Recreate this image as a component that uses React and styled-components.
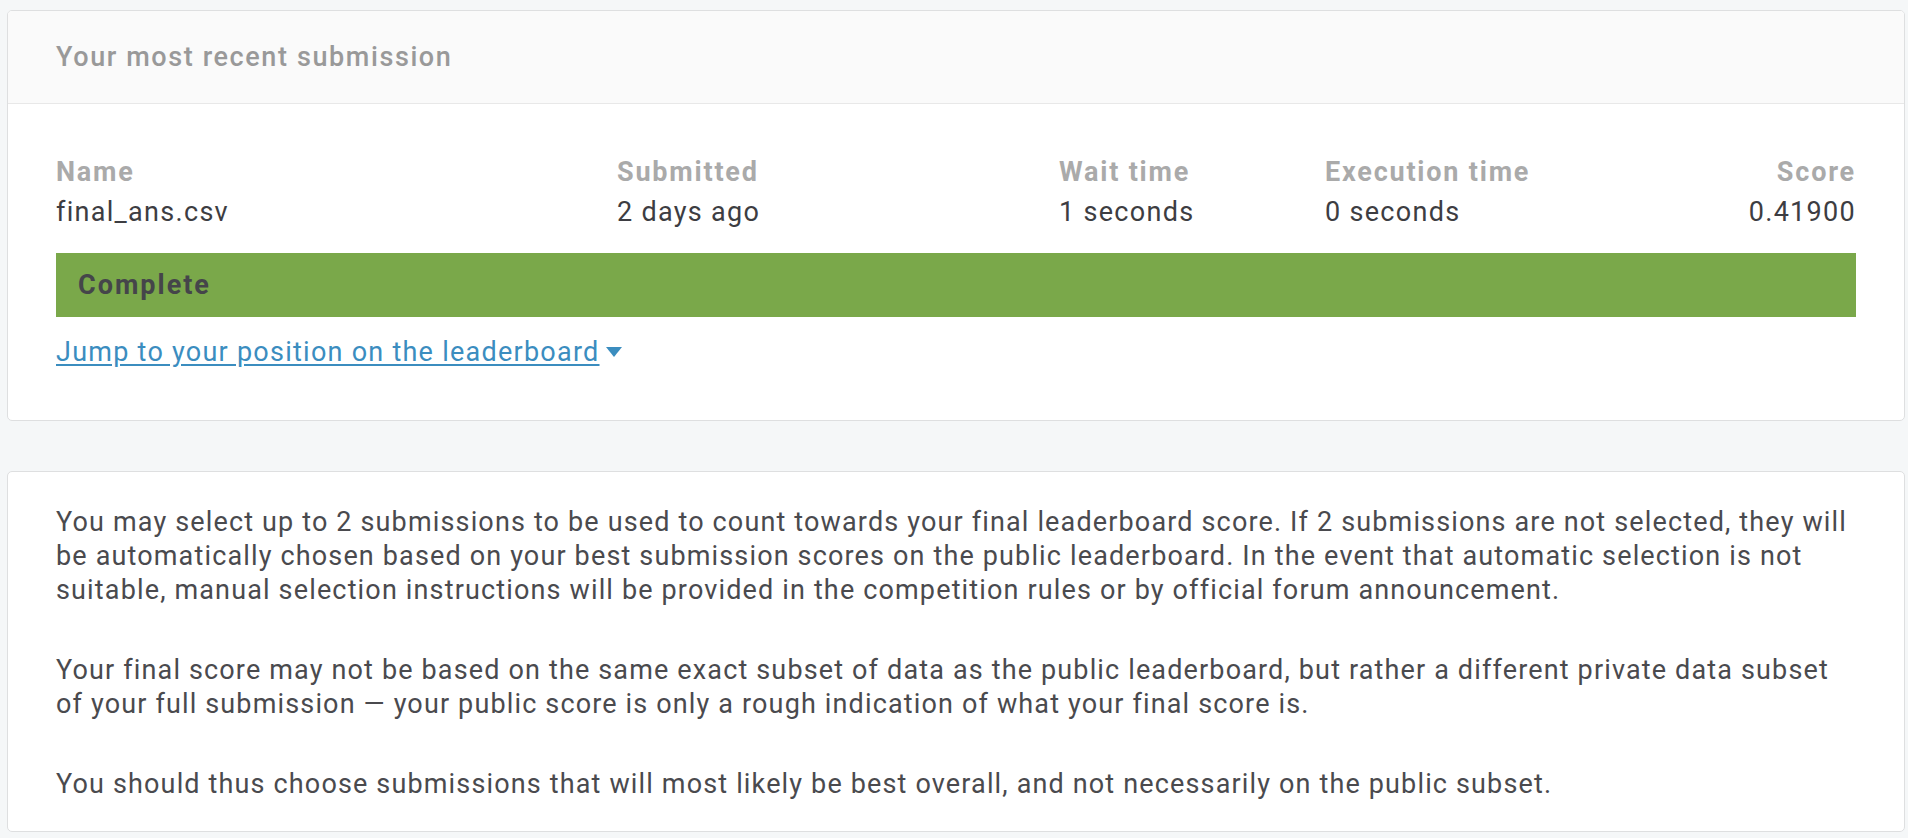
import React from 'react';
import styled, { createGlobalStyle } from 'styled-components';

const GlobalStyle = createGlobalStyle`
  html, body {
    margin: 0;
    padding: 0;
    background: #f5f7f8;
  }
  body {
    font-family: Roboto, "Liberation Sans", Arial, sans-serif;
    -webkit-font-smoothing: antialiased;
  }
`;

const Page = styled.div`
  padding: 10px 3px 0 7px;
  display: flex;
  flex-direction: column;
  gap: 50px;
`;

const Card = styled.section`
  background: #fff;
  border: 1px solid #dedfe0;
  border-radius: 5px;
  overflow: hidden;
`;

const CardHeader = styled.header`
  height: 92px;
  display: flex;
  align-items: center;
  padding: 0 48px;
  background: #fafafa;
  border-bottom: 1px solid #e8e8e8;
  font-size: 27px;
  font-weight: 500;
  letter-spacing: 1.6px;
  color: #999;
`;

const CardBody = styled.div`
  padding: ${(p) => p.$pad || '48px 48px 48px'};
`;

const StatsGrid = styled.div`
  display: grid;
  grid-template-columns: 561px 442px 266px 1fr auto;
`;

const Stat = styled.div`
  display: flex;
  flex-direction: column;
  align-items: ${(p) => (p.$right ? 'flex-end' : 'flex-start')};
`;

const Label = styled.div`
  font-size: 27px;
  line-height: 40px;
  font-weight: 700;
  letter-spacing: 1.8px;
  color: #aaa;
`;

const Value = styled.div`
  font-size: 27px;
  line-height: 40px;
  letter-spacing: 1.3px;
  color: #3d3d42;
`;

const StatusBar = styled.div`
  margin-top: 21px;
  height: 64px;
  display: flex;
  align-items: center;
  padding: 0 22px;
  background: #7aa84a;
  color: #45454a;
  font-size: 27px;
  font-weight: 700;
  letter-spacing: 2px;
`;

const JumpLink = styled.a`
  display: inline-flex;
  align-items: center;
  gap: 6px;
  margin-top: 15px;
  font-size: 27px;
  line-height: 40px;
  letter-spacing: 1.25px;
  color: #3b8dbf;
  text-decoration: underline;
  text-underline-offset: 3px;
  cursor: pointer;
`;

const Caret = styled.svg`
  width: 16px;
  height: 10px;
  fill: #3b8dbf;
`;

const Para = styled.p`
  margin: 0 0 46px;
  font-size: 27px;
  line-height: 34px;
  letter-spacing: 1.15px;
  color: #4a4a4e;
  &:last-child {
    margin-bottom: 0;
  }
`;

const stats = [
  { label: 'Name', value: 'final_ans.csv' },
  { label: 'Submitted', value: '2 days ago' },
  { label: 'Wait time', value: '1 seconds' },
  { label: 'Execution time', value: '0 seconds' },
  { label: 'Score', value: '0.41900', right: true },
];

export default function App() {
  return (
    <>
      <GlobalStyle />
      <Page>
        <Card>
          <CardHeader>Your most recent submission</CardHeader>
          <CardBody>
            <StatsGrid>
              {stats.map((s) => (
                <Stat key={s.label} $right={s.right}>
                  <Label>{s.label}</Label>
                  <Value>{s.value}</Value>
                </Stat>
              ))}
            </StatsGrid>
            <StatusBar>Complete</StatusBar>
            <JumpLink>
              Jump to your position on the leaderboard
              <Caret viewBox="0 0 16 10">
                <path d="M0 0 H16 L8 10 Z" />
              </Caret>
            </JumpLink>
          </CardBody>
        </Card>
        <Card>
          <CardBody $pad="33px 48px 30px">
            <Para>
              You may select up to 2 submissions to be used to count towards your final leaderboard score. If 2 submissions are not selected, they will be automatically chosen based on your best submission scores on the public leaderboard. In the event that automatic selection is not suitable, manual selection instructions will be provided in the competition rules or by official forum announcement.
            </Para>
            <Para>
              Your final score may not be based on the same exact subset of data as the public leaderboard, but rather a different private data subset of your full submission — your public score is only a rough indication of what your final score is.
            </Para>
            <Para>
              You should thus choose submissions that will most likely be best overall, and not necessarily on the public subset.
            </Para>
          </CardBody>
        </Card>
      </Page>
    </>
  );
}
